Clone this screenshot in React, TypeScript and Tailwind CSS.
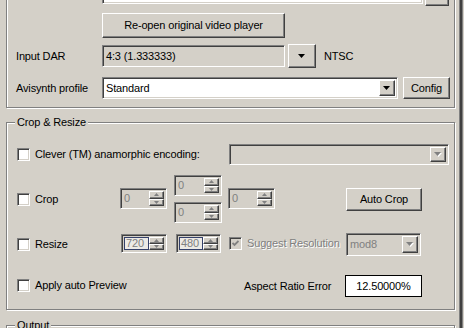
import React from "react";

const raised =
  "border border-t-white border-l-white border-r-[#404040] border-b-[#404040] shadow-[inset_-1px_-1px_0_#808080] bg-[#d4d0c8]";
const sunken =
  "border border-t-[#808080] border-l-[#808080] border-b-white border-r-white shadow-[inset_1px_1px_0_#404040,inset_-1px_-1px_0_#d4d0c8]";
const etched =
  "border border-[#808080] shadow-[inset_1px_1px_0_#fff,1px_1px_0_#fff]";
const embossed = "text-[#808080] [text-shadow:1px_1px_0_#fff]";

function Down({ color = "#000", shadow = false }: { color?: string; shadow?: boolean }) {
  return (
    <svg width="8" height="5" viewBox="0 0 8 5" className="block">
      {shadow && <polygon points="1,1 8,1 4.5,5" fill="#fff" />}
      <polygon points="0,0 7,0 3.5,4" fill={color} />
    </svg>
  );
}

function Tiny({ up }: { up?: boolean }) {
  return (
    <svg width="5" height="3" viewBox="0 0 5 3" className="block">
      {up ? <polygon points="2.5,0 5,3 0,3" fill="#808080" /> : <polygon points="0,0 5,0 2.5,3" fill="#808080" />}
    </svg>
  );
}

function Check({ checked = false, disabled = false }: { checked?: boolean; disabled?: boolean }) {
  return (
    <div
      className={`w-[13px] h-[13px] shrink-0 flex items-center justify-center ${sunken} ${
        disabled ? "bg-[#d4d0c8]" : "bg-white"
      }`}
    >
      {checked && (
        <svg width="7" height="7" viewBox="0 0 7 7" className="block">
          <polyline points="0.5,3 2.5,5 6.5,1" fill="none" stroke="#808080" strokeWidth="1.8" />
        </svg>
      )}
    </div>
  );
}

function Spin({ value, className, focus = false }: { value: string; className: string; focus?: boolean }) {
  return (
    <div className={`flex p-[2px] ${sunken} bg-[#d4d0c8] ${className}`}>
      <div
        className={`flex-1 flex items-center pl-[1px] text-[#808080] leading-none ${
          focus ? "border border-[#34406a] bg-[#eceae6]" : ""
        }`}
      >
        {value}
      </div>
      <div className="w-[15px] flex flex-col">
        <div className={`flex-1 flex items-center justify-center ${raised}`}>
          <Tiny up />
        </div>
        <div className={`flex-1 flex items-center justify-center ${raised}`}>
          <Tiny />
        </div>
      </div>
    </div>
  );
}

function Combo({
  text,
  className,
  disabled = false,
}: {
  text: string;
  className: string;
  disabled?: boolean;
}) {
  return (
    <div className={`flex p-[2px] ${sunken} ${disabled ? "bg-[#d4d0c8]" : "bg-white"} ${className}`}>
      <div className={`flex-1 flex items-center pl-[1px] ${disabled ? "text-[#808080]" : ""}`}>{text}</div>
      <div className={`w-[16px] flex items-center justify-center ${raised}`}>
        {disabled ? <Down color="#808080" shadow /> : <Down />}
      </div>
    </div>
  );
}

function Group({ label, className, children }: { label?: string; className: string; children?: React.ReactNode }) {
  return (
    <div className={`relative w-[449px] shrink-0 ${etched} ${className}`}>
      {label && (
        <div className="absolute left-[8px] top-[-7px] px-[2px] bg-[#d4d0c8] leading-[13px]">{label}</div>
      )}
      {children}
    </div>
  );
}

export default function App() {
  return (
    <div className="w-[464px] h-[328px] overflow-hidden bg-[#d4d0c8] flex text-[11px] leading-[13px] tracking-[-0.15px] text-black font-['Liberation_Sans',Arial,sans-serif]">
      <div className="w-[459px] shrink-0 flex flex-col pl-[6px]">
        {/* Top group (clipped) */}
        <Group className="h-[138px] mt-[-30px] flex flex-col">
          <div className="flex mt-[11px] h-[24px]">
            <div className={`ml-[95px] w-[321px] h-[22px] bg-white ${sunken}`} />
            <div className={`ml-[2px] w-[24px] h-[24px] ${raised}`} />
          </div>
          <div className="flex mt-[7px] h-[25px]">
            <div className={`ml-[95px] w-[183px] h-[25px] flex items-center justify-center ${raised}`}>
              Re-open original video player
            </div>
          </div>
          <div className="flex items-center mt-[6px] h-[24px]">
            <div className="ml-[9px] w-[86px]">Input DAR</div>
            <div className={`w-[183px] h-[22px] flex items-center pl-[3px] bg-[#d4d0c8] ${sunken}`}>
              4:3 (1.333333)
            </div>
            <div className={`ml-[3px] w-[28px] h-[24px] flex items-center justify-center ${raised}`}>
              <Down />
            </div>
            <div className="ml-[8px]">NTSC</div>
          </div>
          <div className="flex items-center mt-[9px] h-[22px]">
            <div className="ml-[9px] w-[86px]">Avisynth profile</div>
            <Combo text="Standard" className="w-[296px] h-[22px]" />
            <div className={`ml-[5px] w-[47px] h-[22px] flex items-center justify-center ${raised}`}>Config</div>
          </div>
        </Group>

        {/* Crop & Resize */}
        <Group label="Crop & Resize" className="h-[188px] mt-[14px] flex flex-col">
          <div className="flex items-center mt-[21px] h-[21px]">
            <div className="ml-[10px]">
              <Check />
            </div>
            <div className="ml-[5px]">Clever (TM) anamorphic encoding:</div>
            <Combo text="" disabled className="ml-auto mr-[5px] w-[220px] h-[21px]" />
          </div>

          <div className="flex items-start mt-[10px] h-[48px]">
            <div className="ml-[10px] w-[103px] mt-[18px] h-[13px] flex items-center">
              <Check />
              <div className="ml-[5px]">Crop</div>
            </div>
            <Spin value="0" className="w-[47px] h-[21px] mt-[13px]" />
            <div className="ml-[7px] w-[48px] flex flex-col gap-[6px]">
              <Spin value="0" className="w-[48px] h-[21px]" />
              <Spin value="0" className="w-[48px] h-[21px]" />
            </div>
            <Spin value="0" className="ml-[6px] w-[47px] h-[21px] mt-[13px]" />
            <div className={`ml-[71px] mt-[13px] w-[76px] h-[23px] flex items-center justify-center ${raised}`}>
              Auto Crop
            </div>
          </div>

          <div className="flex items-start mt-[10px] h-[23px]">
            <div className="ml-[10px] w-[103px] mt-[5px] h-[13px] flex items-center">
              <Check />
              <div className="ml-[5px]">Resize</div>
            </div>
            <Spin value="720" focus className="ml-[1px] mt-[1px] w-[46px] h-[19px]" />
            <Spin value="480" focus className="ml-[9px] mt-[1px] w-[45px] h-[19px]" />
            <div className="ml-[8px] mt-[4px] h-[13px] flex items-center">
              <Check checked disabled />
              <div className={`ml-[5px] ${embossed}`}>Suggest Resolution</div>
            </div>
            <Combo text="mod8" disabled className="ml-auto mr-[33px] w-[75px] h-[23px]" />
          </div>

          <div className="flex items-start mt-[19px] h-[22px]">
            <div className="ml-[10px] mt-[4px] h-[13px] flex items-center">
              <Check />
              <div className="ml-[5px]">Apply auto Preview</div>
            </div>
            <div className="ml-auto w-[101px] h-[22px] flex items-center">Aspect Ratio Error</div>
            <div className="mr-[32px] w-[77px] h-[22px] bg-white border border-black flex items-center justify-center">
              12.50000%
            </div>
          </div>
        </Group>

        {/* Output */}
        <Group label="Output" className="h-[50px] mt-[15px]" />
      </div>
      <div className="w-[1px] shrink-0 bg-[#808080]" />
      <div className="w-[2px] shrink-0 bg-[#404040]" />
      <div className="w-[1px] shrink-0 bg-[#808080]" />
    </div>
  );
}
